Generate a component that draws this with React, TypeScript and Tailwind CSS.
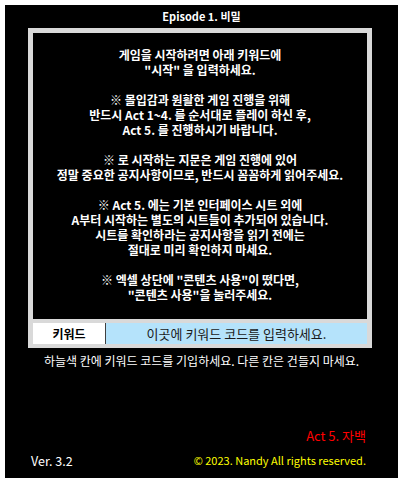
import React from "react";

const notice: string[][] = [
  ["게임을 시작하려면 아래 키워드에", "\"시작\" 을 입력하세요."],
  ["※ 몰입감과 원활한 게임 진행을 위해", "반드시 Act 1~4. 를 순서대로 플레이 하신 후,", "Act 5. 를 진행하시기 바랍니다."],
  ["※ 로 시작하는 지문은 게임 진행에 있어", "정말 중요한 공지사항이므로, 반드시 꼼꼼하게 읽어주세요."],
  [
    "※ Act 5. 에는 기본 인터페이스 시트 외에",
    "A부터 시작하는 별도의 시트들이 추가되어 있습니다.",
    "시트를 확인하라는 공지사항을 읽기 전에는",
    "절대로 미리 확인하지 마세요.",
  ],
  ["※ 엑셀 상단에 \"콘텐츠 사용\"이 떴다면,", "\"콘텐츠 사용\"을 눌러주세요."],
];

const font = "font-['Noto_Sans_CJK_KR','Noto_Sans',sans-serif]";

export default function App() {
  return (
    <div className={`w-[406px] h-[486px] bg-white p-[5px] ${font}`}>
      <div className="w-[393px] h-[473px] bg-black flex flex-col text-white">
        {/* title */}
        <div className="h-[23px] flex items-center justify-center text-[11px] font-bold">
          Episode 1. 비밀
        </div>

        {/* main frame */}
        <div className="ml-[23px] w-[344px] bg-[#d9d9d9] p-[5px] pb-[4px] flex flex-col gap-[4px]">
          <div className="h-[286px] bg-black pt-[14px] flex flex-col gap-[15px] text-[12px] font-bold leading-[15px] text-center">
            {notice.map((block, i) => (
              <div key={i}>
                {block.map((line, j) => (
                  <p key={j} className="whitespace-nowrap">
                    {line}
                  </p>
                ))}
              </div>
            ))}
          </div>

          {/* keyword row */}
          <div className="h-[21px] flex">
            <div className="w-[72px] bg-white text-black text-[12px] font-bold flex items-center justify-center">
              키워드
            </div>
            <div className="w-px bg-[#404040]" />
            <div className="flex-1 bg-[#b5e3fb] text-[#1a1a1a] text-[13px] flex items-center justify-center">
              이곳에 키워드 코드를 입력하세요.
            </div>
          </div>
        </div>

        <p className="mt-[5px] leading-[15px] text-[12px] text-center whitespace-nowrap">
          하늘색 칸에 키워드 코드를 기입하세요. 다른 칸은 건들지 마세요.
        </p>

        {/* footer */}
        <div className="mt-[60px] pr-[32px] leading-[15px] text-[13px] text-right text-[#ff0000]">
          Act 5. 자백
        </div>
        <div className="mt-[10px] pl-[26px] pr-[32px] leading-[15px] flex justify-between items-center">
          <span className="text-[12.5px]">Ver. 3.2</span>
          <span className="text-[11px] text-[#ffff00]">© 2023. Nandy All rights reserved.</span>
        </div>
      </div>
    </div>
  );
}
